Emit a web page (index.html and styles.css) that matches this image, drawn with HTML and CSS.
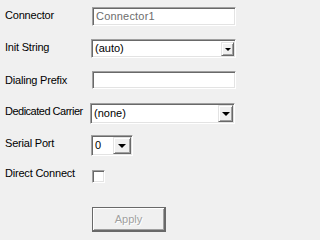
FILE: index.html
```html
<!DOCTYPE html>
<html>
<head>
<meta charset="utf-8">
<link rel="stylesheet" href="styles.css">
</head>
<body>
<div class="form">
  <div class="row">
    <div class="label">Connector</div>
    <div class="textbox tb-conn"><span class="disabled-text">Connector1</span></div>
  </div>
  <div class="row">
    <div class="label">Init String</div>
    <div class="combo combo-init">
      <span class="value">(auto)</span>
      <span class="dd dd-init"><span class="arrow small"></span></span>
    </div>
  </div>
  <div class="row">
    <div class="label label-dial">Dialing Prefix</div>
    <div class="textbox tb-dial"></div>
  </div>
  <div class="row">
    <div class="label label-ded">Dedicated Carrier</div>
    <div class="combo combo-ded">
      <span class="value">(none)</span>
      <span class="dd dd-ded"><span class="arrow"></span></span>
    </div>
  </div>
  <div class="row">
    <div class="label">Serial Port</div>
    <div class="combo combo-serial">
      <span class="value">0</span>
      <span class="dd dd-serial"><span class="arrow"></span></span>
    </div>
  </div>
  <div class="row row-check">
    <div class="label label-check">Direct Connect</div>
    <div class="checkbox"></div>
  </div>
  <div class="row row-btn">
    <div></div>
    <div class="button"><span class="btn-text">Apply</span></div>
  </div>
</div>
</body>
</html>
```

FILE: styles.css
```css
html, body {
  margin: 0;
  padding: 0;
  background: #f0f0f0;
  width: 240px;
  height: 235px;
  overflow: hidden;
}
body {
  font-family: "Liberation Sans", Arial, sans-serif;
  font-size: 11px;
  line-height: 13px;
  color: #000;
}
.form {
  display: flex;
  flex-direction: column;
  padding-top: 7px;
}
.row {
  display: grid;
  grid-template-columns: 91px 145px;
  height: 32px;
  align-items: start;
}
.label {
  padding-left: 5px;
  padding-top: 2px;
  white-space: nowrap;
  letter-spacing: -0.2px;
}
.label-dial { padding-top: 3px; }
.label-ded { letter-spacing: -0.5px; }
.textbox, .combo, .checkbox {
  box-sizing: border-box;
  background: #fff;
  border: 1px solid;
  border-color: #a0a0a0 #fff #fff #a0a0a0;
  box-shadow: inset 1px 1px 0 #696969, inset -1px -1px 0 #e3e3e3;
}
.textbox {
  margin-left: 1px;
  width: 144px;
  height: 19px;
  padding: 2px 0 0 3px;
}
.tb-dial { height: 18px; }
.disabled-text { color: #6d6d6d; letter-spacing: 0.2px; }
.combo {
  display: flex;
  align-items: center;
  justify-content: space-between;
  padding: 0 1px 0 2px;
}
.combo .value { padding-left: 1px; }
.combo-init { width: 145px; height: 19px; }
.combo-ded { width: 145px; height: 21px; margin-left: -1px; }
.combo-serial { width: 42px; height: 21px; }
.dd {
  box-sizing: border-box;
  display: flex;
  align-items: center;
  justify-content: center;
  background: #f0f0f0;
  border: 1px solid;
  border-color: #e3e3e3 #696969 #696969 #e3e3e3;
  box-shadow: inset 1px 1px 0 #fff, inset -1px -1px 0 #a0a0a0;
}
.dd-init { width: 13px; height: 14px; }
.dd-ded { width: 15px; height: 17px; }
.dd-serial { width: 18px; height: 17px; }
.arrow {
  width: 0;
  height: 0;
  border-left: 4px solid transparent;
  border-right: 4px solid transparent;
  border-top: 4px solid #000;
  margin-top: 1px;
}
.arrow.small {
  border-left-width: 3px;
  border-right-width: 3px;
  border-top-width: 3px;
}
.row-check { height: 40px; }
.label-check { padding-top: 0; }
.checkbox {
  margin-left: 1px;
  margin-top: 3px;
  width: 13px;
  height: 13px;
}
.row-btn { height: 24px; }
.button {
  box-sizing: border-box;
  margin-left: 1px;
  width: 74px;
  height: 25px;
  background: #f0f0f0;
  border: 1px solid #696969;
  border-right-width: 2px;
  border-bottom-width: 2px;
  box-shadow: inset 1px 1px 0 #fff, inset -1px -1px 0 #a0a0a0;
  display: flex;
  align-items: center;
  justify-content: center;
}
.btn-text {
  color: #a0a0a0;
  text-shadow: 1px 1px 0 #fff;
}
```
